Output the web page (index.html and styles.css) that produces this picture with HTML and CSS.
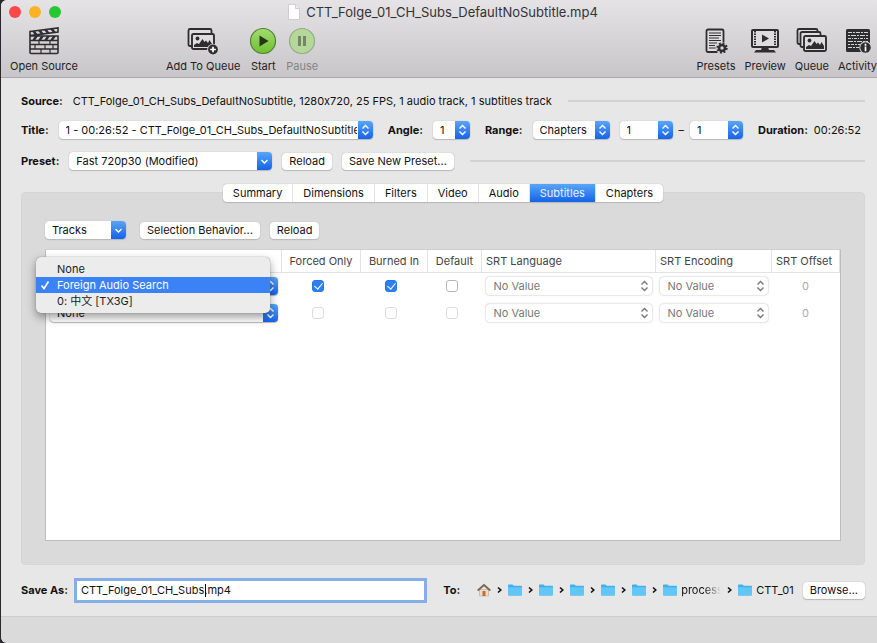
FILE: index.html
```html
<!DOCTYPE html>
<html lang="en">
<head>
  <meta charset="UTF-8" />
  <meta name="viewport" content="width=device-width, initial-scale=1.0"/>
  <title>CTT_Folge_01_CH_Subs_DefaultNoSubtitle.mp4</title>
  <link rel="stylesheet" href="styles.css">
</head>
<body>
  <svg class="defs" width="0" height="0" aria-hidden="true">
    <symbol id="updown" viewBox="0 0 14 18"><path d="M4 7.5 7 4.5l3 3M4 10.5l3 3 3-3"/></symbol>
    <symbol id="down" viewBox="0 0 14 18"><path d="M4 8l3 3 3-3"/></symbol>
    <symbol id="next" viewBox="0 0 5 8"><path d="M1 1.5 3.8 4 1 6.5" fill="none" stroke="#111" stroke-width="1.6"/></symbol>
    <symbol id="folder" viewBox="0 0 14 12">
      <path d="M0 1.2Q0 .5.8.5h3.7l1.3 1.2h7.4q.8 0 .8.8v8.2q0 .8-.8.8H.8q-.8 0-.8-.8z" fill="#45b0e6"/>
      <path d="M0 3.2h14v7.4q0 .8-.8.8H.8q-.8 0-.8-.8z" fill="#62c6f8"/>
    </symbol>
    <symbol id="picture" viewBox="0 0 24 17">
      <rect x="1" y="1" width="22" height="15" rx="1.5" fill="#dedcdf" stroke="#2e2d30" stroke-width="1.9"/>
      <circle cx="6.5" cy="5.5" r="1.9" fill="#2e2d30"/>
      <path d="M3 14v-2l3-2 2 1 3.5-5 2 3 1.5-1.5 2 2.5 1.5-3 2.5 4v3z" fill="#2e2d30"/>
    </symbol>
  </svg>

  <div class="window">
    <header class="titlebar">
      <div class="titlebar-top">
        <div class="lights">
          <button class="light close" aria-label="Close"></button>
          <button class="light minimize" aria-label="Minimize"></button>
          <button class="light maximize" aria-label="Zoom"></button>
        </div>
        <h1 class="window-title">
          <svg width="12" height="16" viewBox="0 0 12 16"><path d="M.5.5h7l4 4v11H.5z" fill="#fff" stroke="#cfcdd0"/><path d="M7.5.5v4h4" fill="#eee" stroke="#cfcdd0"/></svg>
          CTT_Folge_01_CH_Subs_DefaultNoSubtitle.mp4
        </h1>
      </div>

      <nav class="toolbar">
        <button class="tool open-source">
          <svg width="32" height="28" viewBox="0 0 32 28">
            <g fill="none" stroke="#2e2d30" stroke-width="1.6">
              <path d="M2 4.5 30 1v4L2 8.5zM2 9h28v16.5q0 1-1 1H3q-1 0-1-1zM2 13.5h28M2 17.5h28M2 22h28"/>
              <path d="M11 13.5v4M22 13.5v4M7 17.5V22M17 17.5V22M25 17.5V22M13 22v4.5M22 22v4.5" stroke-width="1.2"/>
            </g>
            <path d="M4 4.2 7 8h3L7 4zM10 3.5 13 7.2h3L13 3.2zM16 2.7l3 3.7h3l-3-4zM22 2l3 3.6h3l-3-4zM4 13.5 7 9h3l-3 4.5zM10 13.5 13 9h3l-3 4.5zM16 13.5 19 9h3l-3 4.5zM22 13.5 25 9h3l-3 4.5z" fill="#2e2d30"/>
          </svg>
          Open Source
        </button>
        <button class="tool">
          <svg width="32" height="28" viewBox="0 0 32 28">
            <rect x="1.5" y="2" width="23" height="17" rx="1.5" fill="#dedcdf" stroke="#2e2d30" stroke-width="1.8"/>
            <use href="#picture" x="4" y="5" width="24" height="19"/>
            <circle cx="26" cy="22.5" r="5.8" fill="#dad8db"/>
            <circle cx="26" cy="22.5" r="4.9" fill="#2e2d30"/>
            <path d="M26 19.7v5.6M23.2 22.5h5.6" stroke="#fff" stroke-width="1.7"/>
          </svg>
          Add To Queue
        </button>
        <button class="tool">
          <svg width="28" height="28" viewBox="0 0 28 28">
            <defs><linearGradient id="green" x2="0" y2="1"><stop stop-color="#a3dc72"/><stop offset="1" stop-color="#6fc02f"/></linearGradient></defs>
            <circle cx="14" cy="14" r="12.5" fill="url(#green)" stroke="#4f8036" stroke-width="1.2"/>
            <path d="M10.5 8.5 19.5 14l-9 5.5z" fill="#263619"/>
          </svg>
          Start
        </button>
        <button class="tool" disabled>
          <svg width="28" height="28" viewBox="0 0 28 28">
            <circle cx="14" cy="14" r="12.5" fill="#b5d79a" stroke="#93ad82" stroke-width="1.2"/>
            <path d="M10 9h3v10h-3zM15 9h3v10h-3z" fill="#74856a"/>
          </svg>
          Pause
        </button>
        <span class="spacer"></span>
        <button class="tool">
          <svg width="28" height="28" viewBox="0 0 28 28">
            <rect x="4.5" y="2.5" width="17" height="22.5" rx="1.5" fill="#dedcdf" stroke="#2e2d30" stroke-width="1.8"/>
            <path d="M7 6h12M7 8.5h12M7 11h10M7 13.5h12M7 16h8M7 18.5h6M7 21h7" stroke="#2e2d30" stroke-width="1.2"/>
            <circle cx="20" cy="21" r="6.3" fill="#d4d2d5"/>
            <circle cx="20" cy="21" r="3" fill="none" stroke="#2e2d30" stroke-width="2.6"/>
            <circle cx="20" cy="21" r="4.8" fill="none" stroke="#2e2d30" stroke-width="1.8" stroke-dasharray="1.9 1.87"/>
          </svg>
          Presets
        </button>
        <button class="tool">
          <svg width="30" height="28" viewBox="0 0 30 28">
            <rect x="2" y="3" width="26" height="17" rx="1" fill="#dedcdf" stroke="#2e2d30" stroke-width="2"/>
            <path d="M5 4v15M25 4v15" stroke="#2e2d30" stroke-width="2" stroke-dasharray="1.5 1"/>
            <path d="M12 7.5 19 11.5l-7 4z" fill="#2e2d30"/>
            <path d="M12 20h6l1 3h5l2 2.5H4L6 23h5z" fill="#2e2d30"/>
          </svg>
          Preview
        </button>
        <button class="tool">
          <svg width="32" height="28" viewBox="0 0 32 28">
            <rect x="1.5" y="2" width="20" height="15" rx="1.5" fill="#dedcdf" stroke="#2e2d30" stroke-width="1.8"/>
            <rect x="4.5" y="5" width="20" height="15" rx="1.5" fill="#dedcdf" stroke="#2e2d30" stroke-width="1.8"/>
            <use href="#picture" x="7" y="7" width="24" height="19"/>
          </svg>
          Queue
        </button>
        <button class="tool">
          <svg width="28" height="28" viewBox="0 0 28 28">
            <rect x="2" y="2" width="24" height="23" rx="1.5" fill="#2e2d30"/>
            <g stroke="#d5d3d6" stroke-width="1">
              <path d="M4 5.5h20" stroke-dasharray="4 1 2 1"/><path d="M4 8.5h20" stroke-dasharray="2 1 5 1"/>
              <path d="M4 11.5h20" stroke-dasharray="3 1 1 1"/><path d="M4 14.5h20" stroke-dasharray="5 1 2 1"/>
              <path d="M4 17.5h12" stroke-dasharray="2 1 3 1"/><path d="M4 20.5h11" stroke-dasharray="4 1 2 1"/>
            </g>
            <circle cx="21.5" cy="20.5" r="6.2" fill="#d4d2d5"/>
            <circle cx="21.5" cy="20.5" r="5.2" fill="#2e2d30"/>
            <path d="M21.5 16.7v2M21.5 19.6v4.6" stroke="#fff" stroke-width="1.7"/>
          </svg>
          Activity
        </button>
      </nav>
    </header>

    <main class="content">
      <div class="row source-row">
        <strong>Source:</strong>
        <span>CTT_Folge_01_CH_Subs_DefaultNoSubtitle, 1280x720, 25 FPS, 1 audio track, 1 subtitles track</span>
        <hr class="rule">
      </div>

      <div class="row title-row">
        <div class="field grow">
          <label for="title">Title:</label>
          <span class="select grow"><select id="title"><option>1 - 00:26:52 - CTT_Folge_01_CH_Subs_DefaultNoSubtitle</option></select><svg class="arrow"><use href="#updown"/></svg></span>
        </div>
        <div class="field">
          <label for="angle">Angle:</label>
          <span class="select angle"><select id="angle"><option>1</option></select><svg class="arrow"><use href="#updown"/></svg></span>
        </div>
        <div class="field">
          <label for="range">Range:</label>
          <span class="select range"><select id="range"><option>Chapters</option></select><svg class="arrow"><use href="#updown"/></svg></span>
          <span class="select chapter"><select aria-label="First chapter"><option>1</option></select><svg class="arrow"><use href="#updown"/></svg></span>
          <span class="dash">–</span>
          <span class="select chapter"><select aria-label="Last chapter"><option>1</option></select><svg class="arrow"><use href="#updown"/></svg></span>
        </div>
        <div class="duration"><strong>Duration:</strong> 00:26:52</div>
      </div>

      <div class="row">
        <label for="preset">Preset:</label>
        <span class="select preset"><select id="preset"><option>Fast 720p30 (Modified)</option></select><svg class="arrow"><use href="#down"/></svg></span>
        <button class="btn">Reload</button>
        <button class="btn">Save New Preset...</button>
        <hr class="rule">
      </div>

      <div class="tabs" role="tablist">
        <button class="tab" role="tab">Summary</button>
        <button class="tab" role="tab">Dimensions</button>
        <button class="tab" role="tab">Filters</button>
        <button class="tab" role="tab">Video</button>
        <button class="tab" role="tab">Audio</button>
        <button class="tab active" role="tab" aria-selected="true">Subtitles</button>
        <button class="tab" role="tab">Chapters</button>
      </div>

      <section class="panel">
        <div class="panel-actions">
          <span class="select tracks"><select aria-label="Tracks"><option>Tracks</option></select><svg class="arrow"><use href="#down"/></svg></span>
          <button class="btn">Selection Behavior...</button>
          <button class="btn">Reload</button>
        </div>

        <div class="table-box">
          <table>
            <colgroup>
              <col class="col-track"><col class="col-forced"><col class="col-burned"><col class="col-default"><col class="col-language"><col class="col-encoding"><col class="col-offset">
            </colgroup>
            <thead>
              <tr><th>Track</th><th class="center">Forced Only</th><th class="center">Burned In</th><th class="center">Default</th><th>SRT Language</th><th>SRT Encoding</th><th>SRT Offset</th></tr>
            </thead>
            <tbody>
              <tr>
                <td class="track-cell">
                  <span class="select"><select aria-label="Track 1"><option>Foreign Audio Search</option></select><svg class="arrow"><use href="#updown"/></svg></span>
                  <div class="menu" role="menu">
                    <button class="menu-item" role="menuitem">None</button>
                    <button class="menu-item selected" role="menuitem"><svg class="tick" width="10" height="10" viewBox="0 0 10 10"><path d="M1.5 5.5 4 8.5l4.5-7" fill="none" stroke="#fff" stroke-width="1.7"/></svg>Foreign Audio Search</button>
                    <button class="menu-item" role="menuitem">0: 中文 [TX3G]</button>
                  </div>
                </td>
                <td class="check"><input type="checkbox" aria-label="Forced only" checked></td>
                <td class="check"><input type="checkbox" aria-label="Burned in" checked></td>
                <td class="check"><input type="checkbox" aria-label="Default"></td>
                <td><span class="select plain"><select aria-label="SRT language" disabled><option>No Value</option></select><svg class="arrow"><use href="#updown"/></svg></span></td>
                <td><span class="select plain"><select aria-label="SRT encoding" disabled><option>No Value</option></select><svg class="arrow"><use href="#updown"/></svg></span></td>
                <td class="center offset">0</td>
              </tr>
              <tr>
                <td><span class="select"><select aria-label="Track 2"><option>None</option></select><svg class="arrow"><use href="#updown"/></svg></span></td>
                <td class="check"><input type="checkbox" aria-label="Forced only" disabled></td>
                <td class="check"><input type="checkbox" aria-label="Burned in" disabled></td>
                <td class="check"><input type="checkbox" aria-label="Default" disabled></td>
                <td><span class="select plain"><select aria-label="SRT language" disabled><option>No Value</option></select><svg class="arrow"><use href="#updown"/></svg></span></td>
                <td><span class="select plain"><select aria-label="SRT encoding" disabled><option>No Value</option></select><svg class="arrow"><use href="#updown"/></svg></span></td>
                <td class="center offset">0</td>
              </tr>
            </tbody>
          </table>
        </div>
      </section>

      <div class="row save-row">
        <label for="save-as">Save As:</label>
        <div class="save-field">
          <input type="text" id="save-as" value="CTT_Folge_01_CH_Subs.mp4">
          <span class="caret"></span>
        </div>
        <strong class="to">To:</strong>
        <div class="path">
          <svg width="14" height="14" viewBox="0 0 14 14"><path d="M2.5 6.5h9V13h-9z" fill="#e9ddcf" stroke="#b9a793" stroke-width=".6"/><path d="M5.5 8h3v5h-3z" fill="#c86c32"/><path d="M.7 7.5 7 2l6.3 5.5" fill="none" stroke="#7b6656" stroke-width="1.8"/></svg>
          <svg class="next"><use href="#next"/></svg>
          <svg class="folder"><use href="#folder"/></svg>
          <svg class="next"><use href="#next"/></svg>
          <svg class="folder"><use href="#folder"/></svg>
          <svg class="next"><use href="#next"/></svg>
          <svg class="folder"><use href="#folder"/></svg>
          <svg class="next"><use href="#next"/></svg>
          <svg class="folder"><use href="#folder"/></svg>
          <svg class="next"><use href="#next"/></svg>
          <svg class="folder"><use href="#folder"/></svg>
          <svg class="next"><use href="#next"/></svg>
          <span class="crumb"><svg class="folder"><use href="#folder"/></svg><span class="fade">process</span></span>
          <svg class="next"><use href="#next"/></svg>
          <span class="crumb"><svg class="folder"><use href="#folder"/></svg>CTT_01</span>
        </div>
        <button class="btn">Browse...</button>
      </div>
    </main>

    <footer class="statusbar"></footer>
  </div>
</body>
</html>
```
FILE: styles.css
```css
* {
  box-sizing: border-box;
}
body {
  margin: 0;
  background: #29282c;
  color: #111;
  font-family: Inter, "Noto Sans CJK SC", sans-serif;
  font-size: 11px;
  line-height: 16px;
  font-variant-ligatures: no-contextual;
}
button, select, input {
  font: inherit;
  font-variant-ligatures: no-contextual;
  color: inherit;
  margin: 0;
}
.defs {
  position: absolute;
}
.window {
  display: flex;
  flex-direction: column;
  min-height: 100vh;
  margin-left: 1px;
  background: #e7e7e7;
  border-radius: 6px 0 0 6px;
  overflow: hidden;
}

/* title bar and toolbar */
.titlebar {
  height: 78px;
  background: linear-gradient(#e5e3e6, #c8c6c9);
  border-bottom: 1px solid #aaa8ab;
}
.titlebar-top {
  display: grid;
  grid-template-columns: 1fr auto 1fr;
  align-items: center;
  height: 24px;
  padding-left: 8px;
}
.lights {
  display: flex;
  gap: 8px;
}
.light {
  width: 12px;
  height: 12px;
  padding: 0;
  border: none;
  border-radius: 50%;
}
.close {
  background: #fc4648;
}
.minimize {
  background: #fdb225;
}
.maximize {
  background: #27c732;
}
.window-title {
  display: flex;
  align-items: center;
  gap: 6px;
  margin: 0;
  font-size: 13px;
  font-weight: 400;
  color: #333;
}
.toolbar {
  display: flex;
  gap: 9px;
  padding: 3px 0 0 9px;
}
.tool {
  display: flex;
  flex-direction: column;
  align-items: center;
  gap: 3px;
  padding: 0;
  border: none;
  background: none;
  color: #222;
}
.tool:disabled {
  color: #858386;
}
.open-source {
  margin-right: 79px;
}
.spacer {
  flex: 1;
}

/* form rows */
.content {
  flex: 1;
  display: flex;
  flex-direction: column;
  padding: 14px 12px 17px 20px;
}
.row {
  display: flex;
  align-items: center;
  gap: 10px;
  height: 18px;
  margin-bottom: 12px;
  white-space: nowrap;
}
.source-row {
  margin-bottom: 11px;
}
.title-row {
  gap: 15px;
  margin-right: 4px;
  margin-bottom: 13px;
}
.field {
  display: flex;
  align-items: center;
  gap: 10px;
  min-width: 0;
}
label, strong {
  font-weight: 700;
}
.grow {
  flex: 1;
}
.duration {
  display: flex;
  gap: 6px;
}
.rule {
  flex: 1;
  height: 2px;
  margin: 0 0 0 6px;
  border: none;
  background: #d2d2d2;
}
.select {
  display: grid;
  min-width: 0;
  height: 18px;
  border-radius: 4px;
  background: #fff;
  box-shadow: 0 0 1px #999, 0 1px 1px #bbb;
  overflow: hidden;
}
.select select {
  grid-area: 1 / 1;
  width: 100%;
  min-width: 0;
  height: 18px;
  padding: 0 16px 0 7px;
  border: none;
  background: none;
  appearance: none;
  overflow: hidden;
}
.arrow {
  grid-area: 1 / 1;
  justify-self: end;
  width: 15px;
  height: 18px;
  background: linear-gradient(#5aa5f8, #1463ea);
  fill: none;
  stroke: #fff;
  stroke-width: 1.4;
  pointer-events: none;
}
.angle {
  width: 37px;
}
.range {
  width: 77px;
}
.chapter {
  width: 53px;
}
.dash {
  margin: 0 -4px;
}
.preset {
  width: 203px;
}
.tracks {
  width: 81px;
}
.btn {
  height: 17px;
  padding: 0 7px;
  border: none;
  border-radius: 4px;
  background: #fff;
  box-shadow: 0 0 1px #999, 0 1px 1px #bbb;
  line-height: 17px;
  white-space: nowrap;
}

/* tabs */
.tabs {
  position: relative;
  display: flex;
  align-self: center;
  margin: 2px 0 -10px;
  border-radius: 4px;
  background: #fff;
  box-shadow: 0 0 1px #999, 0 1px 1px #bbb;
}
.tab {
  height: 18px;
  padding: 0 10px;
  border: none;
  border-right: 1px solid #e2e2e2;
  background: none;
}
.tab:last-child {
  border-right: none;
}
.tab.active {
  background: linear-gradient(#5aa5f8, #1463ea);
  color: #e8f2ff;
}

/* subtitles panel */
.panel {
  flex: 1;
  display: flex;
  flex-direction: column;
  margin-bottom: 16px;
  padding: 28px 23px 23px;
  border: 1px solid #d6d6d6;
  border-radius: 4px;
  background: #dadada;
}
.panel-actions {
  display: flex;
  align-items: center;
  gap: 14px;
  margin-bottom: 10px;
}
.panel-actions .btn + .btn {
  margin-left: -4px;
}
.table-box {
  flex: 1;
  border: 1px solid #bdbdbd;
  border-top-color: #cfcfcf;
  background: #fff;
}
table {
  width: 100%;
  border-collapse: collapse;
  table-layout: fixed;
}
.col-forced {
  width: 79px;
}
.col-burned {
  width: 67px;
}
.col-default {
  width: 54px;
}
.col-language {
  width: 174px;
}
.col-encoding {
  width: 116px;
}
.col-offset {
  width: 68px;
}
th {
  height: 22px;
  padding: 0 4px;
  border-right: 1px solid #e2e2e2;
  border-bottom: 1px solid #e2e2e2;
  font-weight: 400;
  text-align: left;
  white-space: nowrap;
  color: #444;
}
td {
  height: 27px;
  padding: 0 4px;
}
.center {
  padding: 0;
  text-align: center;
}
.check {
  padding: 0 6px 0 0;
}
.offset {
  color: #aaa;
}
.track-cell {
  position: relative;
}
.plain {
  box-shadow: 0 0 2px #aaa;
}
.plain select {
  padding-left: 8px;
  color: #777;
  opacity: 1;
}
.plain .arrow {
  background: none;
  stroke: #777;
}
input[type="checkbox"] {
  display: block;
  width: 12px;
  height: 12px;
  margin: 0 auto;
  border: 1px solid #b5b5b5;
  border-radius: 3px;
  background: #fff;
  appearance: none;
}
input[type="checkbox"]:disabled {
  border-color: #dcdcdc;
}
input[type="checkbox"]:checked {
  display: grid;
  place-items: center;
  border-color: #2478ea;
  background: #2e80f0;
}
input[type="checkbox"]:checked::before {
  content: "";
  width: 4px;
  height: 7px;
  margin-bottom: 2px;
  border: solid #fff;
  border-width: 0 1px 1px 0;
  transform: rotate(40deg);
}
.menu {
  position: absolute;
  z-index: 1;
  top: -16px;
  left: -10px;
  width: 234px;
  padding: 4px 0;
  border-radius: 5px;
  background: #ececec;
  box-shadow: 0 0 1px #666, 0 4px 10px rgba(0, 0, 0, 0.4);
}
.menu-item {
  display: flex;
  align-items: center;
  width: 100%;
  height: 16px;
  padding: 0 0 0 21px;
  border: none;
  background: none;
  color: #222;
}
.menu-item.selected {
  padding-left: 4px;
  background: #3a82f6;
  color: #fff;
}
.tick {
  margin-right: 7px;
}

/* destination */
.save-row {
  gap: 9px;
  margin: 0;
}
.save-field {
  position: relative;
  flex: 1;
}
.save-field input {
  display: block;
  width: 100%;
  height: 19px;
  padding: 0 4px;
  border: none;
  outline: 3px solid #86aee8;
  background: #fff;
}
.caret {
  position: absolute;
  top: 3px;
  left: 128px;
  width: 1px;
  height: 13px;
  background: #000;
}
.to {
  margin-left: 10px;
}
.path {
  display: flex;
  align-items: center;
  gap: 6px;
  margin-left: 8px;
}
.next {
  width: 5px;
  height: 8px;
}
.folder {
  width: 14px;
  height: 12px;
}
.crumb {
  display: flex;
  align-items: center;
  gap: 4px;
}
.fade {
  width: 40px;
  overflow: hidden;
  mask-image: linear-gradient(to right, #000 60%, transparent);
}
.statusbar {
  height: 27px;
  border-top: 1px solid #cdcdcd;
  background: #dadada;
}
```
